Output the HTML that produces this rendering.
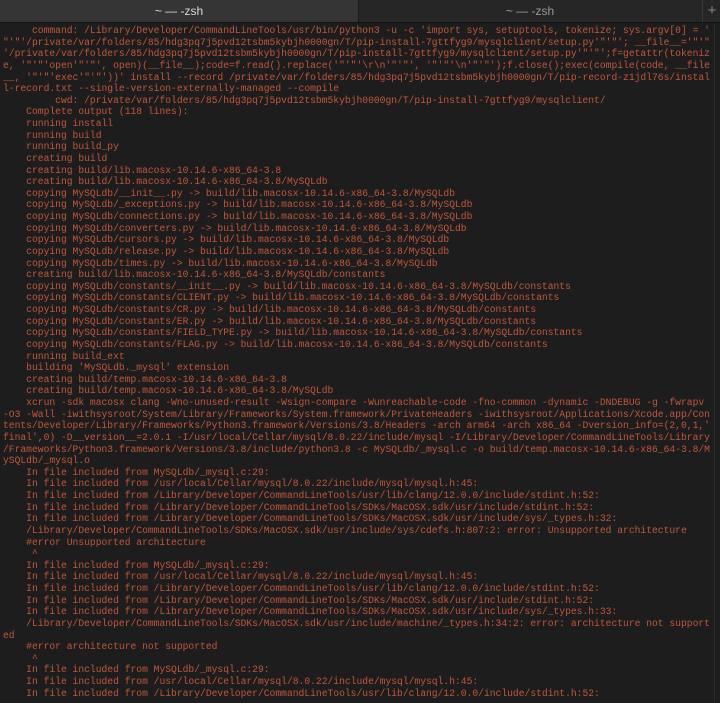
<!DOCTYPE html>
<html><head><meta charset="utf-8"><style>
html,body{margin:0;padding:0;background:#1d1d1d;width:720px;height:703px;overflow:hidden}
.tabs{position:absolute;left:0;top:0;width:720px;height:22px;background:#262626;border-bottom:1px solid #111}
.tab{position:absolute;top:0;height:22px;font:12px "Liberation Sans",sans-serif;color:#9a9a9a;text-align:center;line-height:22px}
.t1{left:0;width:358px;background:#353535;color:#d8d8d8;border-right:1px solid #1a1a1a}
.t2{left:359px;width:342px;background:#262626}
.plus{position:absolute;left:702px;top:0;width:18px;height:22px;color:#888;font:15px "Liberation Sans",sans-serif;line-height:21px;text-align:center;border-left:1px solid #3a3a3a}
pre{position:absolute;left:3px;top:25px;margin:0;font-family:"Liberation Mono",monospace;font-size:9.67px;line-height:11.63px;color:#c0573c;white-space:pre}
.sb{position:absolute;left:714px;top:23px;width:1px;height:680px;background:#2c2c2c}
</style></head><body>
<div class="tabs"><div class="tab t1">~ — -zsh</div><div class="tab t2">~ — -zsh</div><div class="plus">+</div></div>
<pre>     command: /Library/Developer/CommandLineTools/usr/bin/python3 -u -c 'import sys, setuptools, tokenize; sys.argv[0] = '
"'"'/private/var/folders/85/hdg3pq7j5pvd12tsbm5kybjh0000gn/T/pip-install-7gttfyg9/mysqlclient/setup.py'"'"'; __file__='"'"
'/private/var/folders/85/hdg3pq7j5pvd12tsbm5kybjh0000gn/T/pip-install-7gttfyg9/mysqlclient/setup.py'"'"';f=getattr(tokeniz
e, '"'"'open'"'"', open)(__file__);code=f.read().replace('"'"'\r\n'"'"', '"'"'\n'"'"');f.close();exec(compile(code, __file
__, '"'"'exec'"'"'))' install --record /private/var/folders/85/hdg3pq7j5pvd12tsbm5kybjh0000gn/T/pip-record-z1jdl76s/instal
l-record.txt --single-version-externally-managed --compile
         cwd: /private/var/folders/85/hdg3pq7j5pvd12tsbm5kybjh0000gn/T/pip-install-7gttfyg9/mysqlclient/
    Complete output (118 lines):
    running install
    running build
    running build_py
    creating build
    creating build/lib.macosx-10.14.6-x86_64-3.8
    creating build/lib.macosx-10.14.6-x86_64-3.8/MySQLdb
    copying MySQLdb/__init__.py -&gt; build/lib.macosx-10.14.6-x86_64-3.8/MySQLdb
    copying MySQLdb/_exceptions.py -&gt; build/lib.macosx-10.14.6-x86_64-3.8/MySQLdb
    copying MySQLdb/connections.py -&gt; build/lib.macosx-10.14.6-x86_64-3.8/MySQLdb
    copying MySQLdb/converters.py -&gt; build/lib.macosx-10.14.6-x86_64-3.8/MySQLdb
    copying MySQLdb/cursors.py -&gt; build/lib.macosx-10.14.6-x86_64-3.8/MySQLdb
    copying MySQLdb/release.py -&gt; build/lib.macosx-10.14.6-x86_64-3.8/MySQLdb
    copying MySQLdb/times.py -&gt; build/lib.macosx-10.14.6-x86_64-3.8/MySQLdb
    creating build/lib.macosx-10.14.6-x86_64-3.8/MySQLdb/constants
    copying MySQLdb/constants/__init__.py -&gt; build/lib.macosx-10.14.6-x86_64-3.8/MySQLdb/constants
    copying MySQLdb/constants/CLIENT.py -&gt; build/lib.macosx-10.14.6-x86_64-3.8/MySQLdb/constants
    copying MySQLdb/constants/CR.py -&gt; build/lib.macosx-10.14.6-x86_64-3.8/MySQLdb/constants
    copying MySQLdb/constants/ER.py -&gt; build/lib.macosx-10.14.6-x86_64-3.8/MySQLdb/constants
    copying MySQLdb/constants/FIELD_TYPE.py -&gt; build/lib.macosx-10.14.6-x86_64-3.8/MySQLdb/constants
    copying MySQLdb/constants/FLAG.py -&gt; build/lib.macosx-10.14.6-x86_64-3.8/MySQLdb/constants
    running build_ext
    building 'MySQLdb._mysql' extension
    creating build/temp.macosx-10.14.6-x86_64-3.8
    creating build/temp.macosx-10.14.6-x86_64-3.8/MySQLdb
    xcrun -sdk macosx clang -Wno-unused-result -Wsign-compare -Wunreachable-code -fno-common -dynamic -DNDEBUG -g -fwrapv
-O3 -Wall -iwithsysroot/System/Library/Frameworks/System.framework/PrivateHeaders -iwithsysroot/Applications/Xcode.app/Con
tents/Developer/Library/Frameworks/Python3.framework/Versions/3.8/Headers -arch arm64 -arch x86_64 -Dversion_info=(2,0,1,'
final',0) -D__version__=2.0.1 -I/usr/local/Cellar/mysql/8.0.22/include/mysql -I/Library/Developer/CommandLineTools/Library
/Frameworks/Python3.framework/Versions/3.8/include/python3.8 -c MySQLdb/_mysql.c -o build/temp.macosx-10.14.6-x86_64-3.8/M
ySQLdb/_mysql.o
    In file included from MySQLdb/_mysql.c:29:
    In file included from /usr/local/Cellar/mysql/8.0.22/include/mysql/mysql.h:45:
    In file included from /Library/Developer/CommandLineTools/usr/lib/clang/12.0.0/include/stdint.h:52:
    In file included from /Library/Developer/CommandLineTools/SDKs/MacOSX.sdk/usr/include/stdint.h:52:
    In file included from /Library/Developer/CommandLineTools/SDKs/MacOSX.sdk/usr/include/sys/_types.h:32:
    /Library/Developer/CommandLineTools/SDKs/MacOSX.sdk/usr/include/sys/cdefs.h:807:2: error: Unsupported architecture
    #error Unsupported architecture
     ^
    In file included from MySQLdb/_mysql.c:29:
    In file included from /usr/local/Cellar/mysql/8.0.22/include/mysql/mysql.h:45:
    In file included from /Library/Developer/CommandLineTools/usr/lib/clang/12.0.0/include/stdint.h:52:
    In file included from /Library/Developer/CommandLineTools/SDKs/MacOSX.sdk/usr/include/stdint.h:52:
    In file included from /Library/Developer/CommandLineTools/SDKs/MacOSX.sdk/usr/include/sys/_types.h:33:
    /Library/Developer/CommandLineTools/SDKs/MacOSX.sdk/usr/include/machine/_types.h:34:2: error: architecture not support
ed
    #error architecture not supported
     ^
    In file included from MySQLdb/_mysql.c:29:
    In file included from /usr/local/Cellar/mysql/8.0.22/include/mysql/mysql.h:45:
    In file included from /Library/Developer/CommandLineTools/usr/lib/clang/12.0.0/include/stdint.h:52:</pre>
<div class="sb"></div>
</body></html>
